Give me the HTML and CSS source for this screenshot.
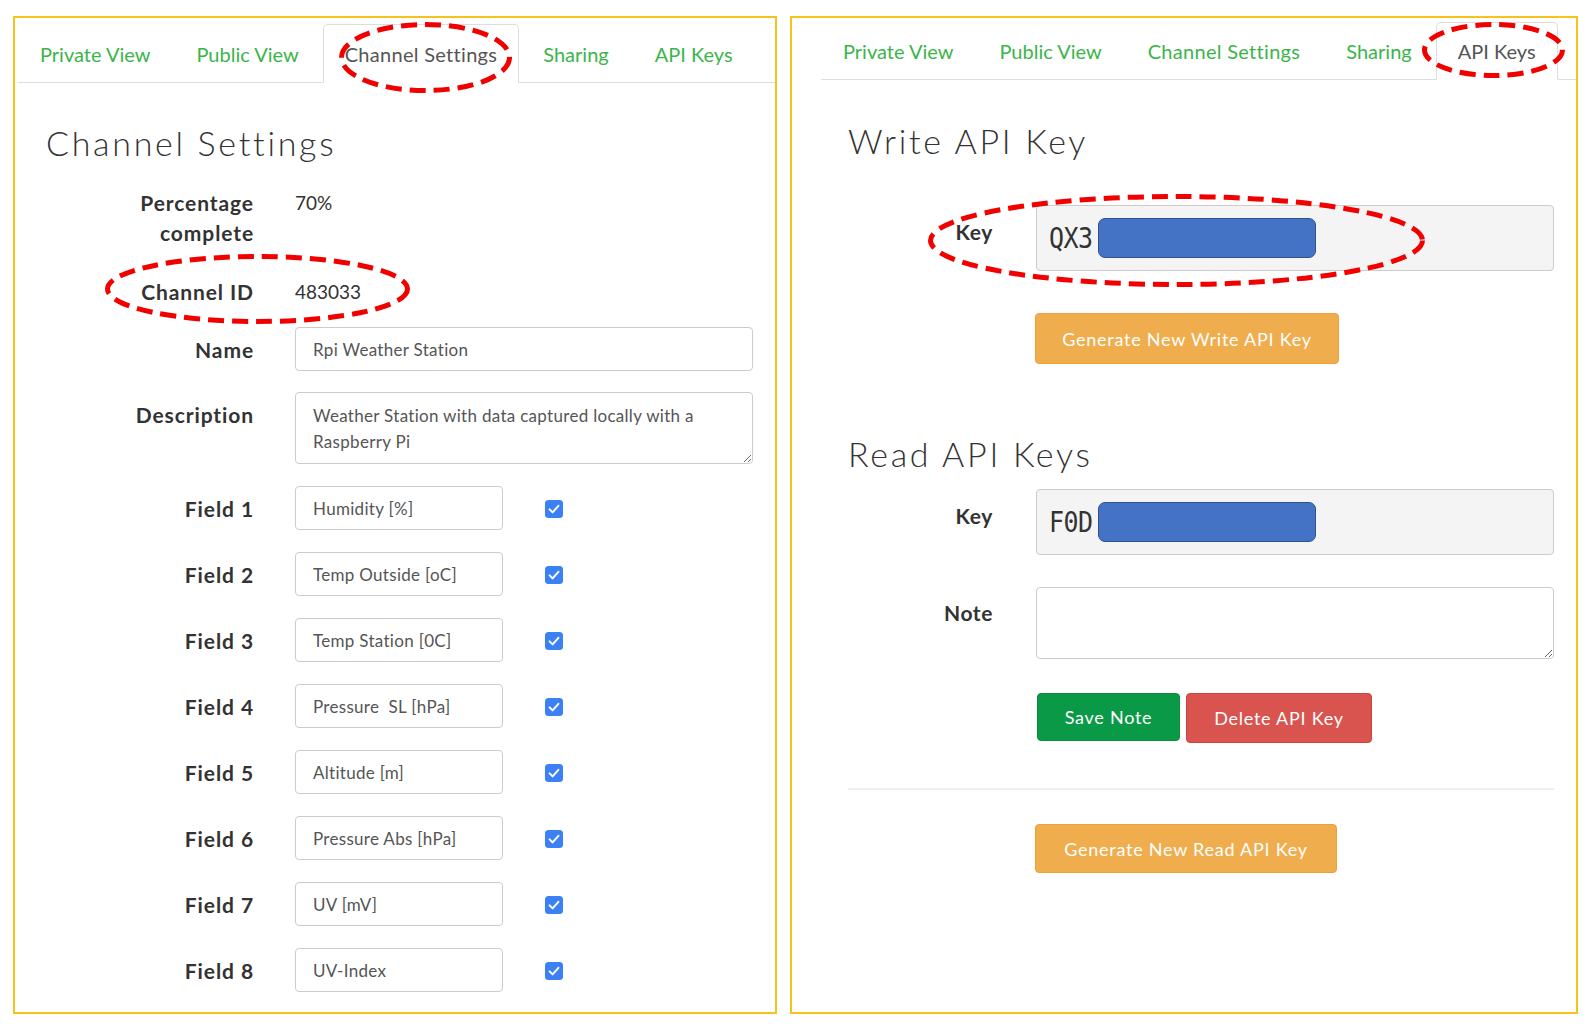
FILE: index.html
```html
<!DOCTYPE html>
<html lang="en">
<head>
<meta charset="utf-8">
<title>Channel Settings / API Keys</title>
<link rel="stylesheet" href="styles.css">
</head>
<body>
<div class="page">
  <section class="panel panel-left">
    <ul class="tabs">
      <li class="tab">Private View</li>
      <li class="tab">Public View</li>
      <li class="tab tab-wide active">Channel Settings</li>
      <li class="tab">Sharing</li>
      <li class="tab">API Keys</li>
    </ul>
    <h2 class="title">Channel Settings</h2>
    <div class="form">
      <div class="row row-pct"><div class="label">Percentage<br>complete</div><div class="value">70%</div></div>
      <div class="row row-cid"><div class="label">Channel ID</div><div class="value">483033</div></div>
      <div class="row row-name"><div class="label label-in">Name</div><input class="input input-wide" value="Rpi Weather Station"></div>
      <div class="row row-desc"><div class="label label-in">Description</div><textarea class="input textarea">Weather Station with data captured locally with a Raspberry Pi</textarea></div>
      <div class="row row-field"><div class="label label-in">Field 1</div><div class="field-ctl"><input class="input input-field" value="Humidity [%]"><span class="check"><svg width="18" height="18" viewBox="0 0 18 18"><rect width="18" height="18" rx="3.5" fill="#3b80f5"/><path d="M4.6 9.4 L7.6 12.4 L13.4 5.8" fill="none" stroke="#fff" stroke-width="2" stroke-linecap="round" stroke-linejoin="round"/></svg></span></div></div>
      <div class="row row-field"><div class="label label-in">Field 2</div><div class="field-ctl"><input class="input input-field" value="Temp Outside [oC]"><span class="check"><svg width="18" height="18" viewBox="0 0 18 18"><rect width="18" height="18" rx="3.5" fill="#3b80f5"/><path d="M4.6 9.4 L7.6 12.4 L13.4 5.8" fill="none" stroke="#fff" stroke-width="2" stroke-linecap="round" stroke-linejoin="round"/></svg></span></div></div>
      <div class="row row-field"><div class="label label-in">Field 3</div><div class="field-ctl"><input class="input input-field" value="Temp Station [0C]"><span class="check"><svg width="18" height="18" viewBox="0 0 18 18"><rect width="18" height="18" rx="3.5" fill="#3b80f5"/><path d="M4.6 9.4 L7.6 12.4 L13.4 5.8" fill="none" stroke="#fff" stroke-width="2" stroke-linecap="round" stroke-linejoin="round"/></svg></span></div></div>
      <div class="row row-field"><div class="label label-in">Field 4</div><div class="field-ctl"><input class="input input-field" value="Pressure  SL [hPa]"><span class="check"><svg width="18" height="18" viewBox="0 0 18 18"><rect width="18" height="18" rx="3.5" fill="#3b80f5"/><path d="M4.6 9.4 L7.6 12.4 L13.4 5.8" fill="none" stroke="#fff" stroke-width="2" stroke-linecap="round" stroke-linejoin="round"/></svg></span></div></div>
      <div class="row row-field"><div class="label label-in">Field 5</div><div class="field-ctl"><input class="input input-field" value="Altitude [m]"><span class="check"><svg width="18" height="18" viewBox="0 0 18 18"><rect width="18" height="18" rx="3.5" fill="#3b80f5"/><path d="M4.6 9.4 L7.6 12.4 L13.4 5.8" fill="none" stroke="#fff" stroke-width="2" stroke-linecap="round" stroke-linejoin="round"/></svg></span></div></div>
      <div class="row row-field"><div class="label label-in">Field 6</div><div class="field-ctl"><input class="input input-field" value="Pressure Abs [hPa]"><span class="check"><svg width="18" height="18" viewBox="0 0 18 18"><rect width="18" height="18" rx="3.5" fill="#3b80f5"/><path d="M4.6 9.4 L7.6 12.4 L13.4 5.8" fill="none" stroke="#fff" stroke-width="2" stroke-linecap="round" stroke-linejoin="round"/></svg></span></div></div>
      <div class="row row-field"><div class="label label-in">Field 7</div><div class="field-ctl"><input class="input input-field" value="UV [mV]"><span class="check"><svg width="18" height="18" viewBox="0 0 18 18"><rect width="18" height="18" rx="3.5" fill="#3b80f5"/><path d="M4.6 9.4 L7.6 12.4 L13.4 5.8" fill="none" stroke="#fff" stroke-width="2" stroke-linecap="round" stroke-linejoin="round"/></svg></span></div></div>
      <div class="row row-field"><div class="label label-in">Field 8</div><div class="field-ctl"><input class="input input-field" value="UV-Index"><span class="check"><svg width="18" height="18" viewBox="0 0 18 18"><rect width="18" height="18" rx="3.5" fill="#3b80f5"/><path d="M4.6 9.4 L7.6 12.4 L13.4 5.8" fill="none" stroke="#fff" stroke-width="2" stroke-linecap="round" stroke-linejoin="round"/></svg></span></div></div>
    </div>
    <svg class="mark mark-tab-left" width="173" height="71" viewBox="0 0 173 71"><ellipse cx="86.5" cy="35.5" rx="84" ry="33" fill="none" stroke="#f20000" stroke-width="5" stroke-dasharray="16 8"/></svg>
    <svg class="mark mark-cid" width="305" height="70" viewBox="0 0 305 70"><ellipse cx="152.5" cy="35" rx="150" ry="32.5" fill="none" stroke="#f20000" stroke-width="5" stroke-dasharray="16 8"/></svg>
  </section>

  <section class="panel panel-right">
    <ul class="tabs">
      <li class="tab">Private View</li>
      <li class="tab">Public View</li>
      <li class="tab tab-wide">Channel Settings</li>
      <li class="tab">Sharing</li>
      <li class="tab active">API Keys</li>
    </ul>
    <h2 class="title">Write API Key</h2>
    <div class="kform">
      <div class="krow krow-write"><div class="klabel">Key</div><div class="keybox"><span class="keytext">QX3</span><span class="redact"></span></div></div>
      <div class="btnrow btnrow-write"><button class="btn btn-warning">Generate New Write API Key</button></div>
    </div>
    <h2 class="title title-read">Read API Keys</h2>
    <div class="kform">
      <div class="krow krow-read"><div class="klabel">Key</div><div class="keybox"><span class="keytext">F0D</span><span class="redact"></span></div></div>
      <div class="krow krow-note"><div class="klabel klabel-note">Note</div><textarea class="input note"></textarea></div>
      <div class="btnrow btnrow-note"><button class="btn btn-success">Save Note</button><button class="btn btn-danger">Delete API Key</button></div>
    </div>
    <hr class="divider">
    <div class="kform">
      <div class="btnrow btnrow-read"><button class="btn btn-warning btn-read">Generate New Read API Key</button></div>
    </div>
    <svg class="mark mark-tab-right" width="143" height="56" viewBox="0 0 143 56"><ellipse cx="71.5" cy="28" rx="69" ry="25.5" fill="none" stroke="#f20000" stroke-width="5" stroke-dasharray="16 8"/></svg>
    <svg class="mark mark-key" width="497" height="93" viewBox="0 0 497 93"><ellipse cx="248.5" cy="46.5" rx="246" ry="44" fill="none" stroke="#f20000" stroke-width="5" stroke-dasharray="16 8"/></svg>
  </section>
</div>
</body>
</html>
```
FILE: styles.css
```css
* { box-sizing: border-box; }
html, body { margin: 0; padding: 0; background: #fff; }
body { font-family: Lato, "Noto Sans", sans-serif; color: #333; }

.page {
  display: flex;
  gap: 13px;
  padding: 16px 0 0 13px;
}

.panel {
  position: relative;
  height: 998px;
  border: 2px solid #f8c21c;
}
.panel-left { width: 764px; }
.panel-right { width: 788px; }

/* tabs */
.tabs {
  list-style: none;
  margin: 0;
  padding: 0;
  display: flex;
  border-bottom: 1px solid #ddd;
}
.panel-left .tabs { margin: 6px 0 0 3px; height: 59px; }
.panel-right .tabs { margin: 4px 0 0 29px; height: 58px; }

.tab {
  height: calc(100% + 1px);
  margin-bottom: -1px;
  margin-right: 2px;
  padding: 0 21px;
  border: 1px solid transparent;
  border-radius: 5px 5px 0 0;
  display: flex;
  align-items: center;
  font-size: 20px;
  color: #3bb54a;
  white-space: nowrap;
}
.tab-wide { letter-spacing: 0.3px; }
.tab.active {
  color: #555;
  background: #fff;
  border-color: #ddd #ddd transparent #ddd;
}

/* headings */
.title {
  margin: 0;
  font-weight: 300;
  font-size: 34px;
  line-height: 40px;
  color: #333;
  letter-spacing: 2.7px;
}
.panel-left .title { margin: 40px 0 0 31px; }
.panel-right .title { margin: 41px 0 0 56px; }
.panel-right .title-read { margin-top: 70px; }

/* left form */
.row {
  display: grid;
  grid-template-columns: 239px 458px;
  column-gap: 41px;
  align-items: start;
}
.label {
  text-align: right;
  font-weight: 700;
  font-size: 21px;
  line-height: 30px;
  letter-spacing: 0.9px;
  color: #333;
}
.label-in { padding-top: 8px; }
.value {
  font-size: 19px;
  line-height: 30px;
  color: #333;
}
.row-pct { margin-top: 25px; }
.row-cid { margin-top: 29px; }
.row-name { margin-top: 20px; }
.row-desc { margin-top: 21px; }
.row-field { margin-top: 22px; }

.input {
  display: block;
  font-family: Lato, "Noto Sans", sans-serif;
  font-size: 17px;
  letter-spacing: 0.3px;
  color: #555;
  background: #fff;
  border: 1px solid #ccc;
  border-radius: 4px;
  padding: 0 17px;
  outline: none;
  margin: 0;
}
.input-wide { width: 458px; height: 44px; }
.textarea {
  width: 458px;
  height: 72px;
  padding-top: 10px;
  line-height: 26px;
  resize: both;
}
.field-ctl {
  display: flex;
  align-items: center;
  gap: 42px;
}
.input-field { width: 208px; height: 44px; }
.check { display: flex; margin-top: 1px; }

/* right form */
.krow {
  display: grid;
  grid-template-columns: 201px 518px;
  column-gap: 43px;
  align-items: start;
}
.klabel {
  text-align: right;
  font-weight: 700;
  font-size: 21px;
  line-height: 30px;
  letter-spacing: 0.6px;
  padding-top: 12px;
  color: #333;
}
.klabel-note { padding-top: 11px; }
.krow-write { margin-top: 44px; }
.krow-read { margin-top: 15px; }
.krow-note { margin-top: 32px; }

.keybox {
  height: 66px;
  background: #f4f4f4;
  border: 1px solid #ccc;
  border-radius: 4px;
  display: flex;
  align-items: center;
  padding-left: 12px;
}
.keytext {
  display: inline-block;
  font-family: "DejaVu Sans Mono", "Liberation Mono", monospace;
  font-size: 25px;
  color: #333;
  letter-spacing: -0.5px;
  transform: scaleY(1.14);
}
.redact {
  display: block;
  width: 218px;
  height: 40px;
  margin-left: 5px;
  background: #4472c4;
  border: 1.5px solid #2f528f;
  border-radius: 7px;
}
.note {
  width: 518px;
  height: 72px;
}

.btnrow {
  display: flex;
  gap: 6px;
  padding-left: 243px;
}
.btnrow-write { margin-top: 42px; }
.btnrow-note { margin-top: 34px; padding-left: 245px; }
.btnrow-read { margin-top: 34px; }

.btn {
  font-family: Lato, "Noto Sans", sans-serif;
  font-size: 18px;
  letter-spacing: 0.75px;
  color: #fff;
  border: 1px solid transparent;
  border-radius: 4px;
  padding: 0;
  margin: 0;
  cursor: pointer;
}
.btn-warning {
  width: 304px;
  height: 51px;
  background: #f0ad4e;
  border-color: #eea236;
}
.btn-read { width: 302px; height: 49px; }
.btn-success {
  width: 143px;
  height: 48px;
  background: #0a9a47;
  border-color: #098c40;
}
.btn-danger {
  width: 186px;
  height: 50px;
  background: #d9534f;
  border-color: #d43f3a;
}

.divider {
  margin: 45px 0 0 56px;
  width: 706px;
  border: 0;
  border-top: 2px solid #eee;
  height: 0;
}

/* annotation marks */
.mark { position: absolute; pointer-events: none; }
.mark-tab-left { left: 324px; top: 4px; }
.mark-cid { left: 90px; top: 236px; }
.mark-tab-right { left: 630px; top: 4px; }
.mark-key { left: 136px; top: 176px; }
```
